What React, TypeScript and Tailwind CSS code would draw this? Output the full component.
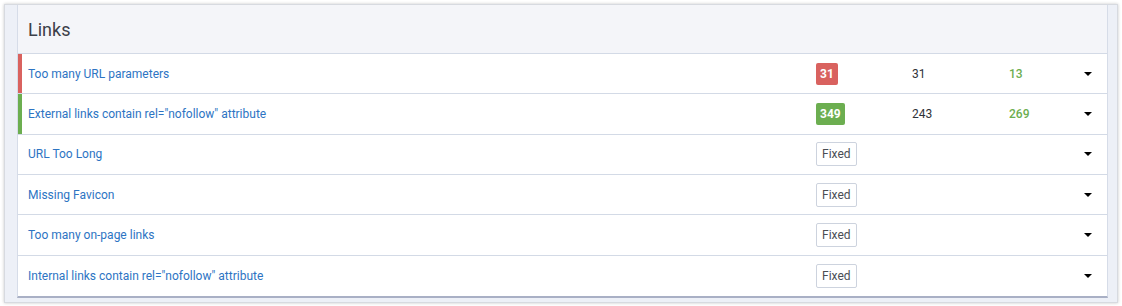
import React from "react"

type Issue = {
	title: string
	bar?: "red" | "green"
	count?: number
	found?: number
	fixed?: number
}

const issues: Issue[] = [
	{ title: "Too many URL parameters", bar: "red", count: 31, found: 31, fixed: 13 },
	{ title: 'External links contain rel="nofollow" attribute', bar: "green", count: 349, found: 243, fixed: 269 },
	{ title: "URL Too Long" },
	{ title: "Missing Favicon" },
	{ title: "Too many on-page links" },
	{ title: 'Internal links contain rel="nofollow" attribute' },
]

function Row({ issue, last }: { issue: Issue; last: boolean }) {
	const barColor = issue.bar === "red" ? "bg-[#d9625f]" : issue.bar === "green" ? "bg-[#6cae50]" : "bg-transparent"
	const badgeColor = issue.bar === "red" ? "bg-[#d9625f]" : "bg-[#6cae50]"
	return (
		<div className={`flex h-[40.33px] items-stretch ${last ? "" : "border-b border-[#d3dae6]"}`}>
			<div className={`w-[4px] shrink-0 ${barColor}`} />
			<div className="flex w-[794px] shrink-0 items-center pl-[6px]">
				<a className="text-[12px] text-[#2d74c3] cursor-pointer">{issue.title}</a>
			</div>
			<div className="flex w-[96px] shrink-0 items-center">
				{issue.count !== undefined ? (
					<span className={`rounded-[2px] px-[4px] h-[22px] leading-[22px] text-[12px] font-bold text-white ${badgeColor}`}>
						{issue.count}
					</span>
				) : (
					<span className="rounded-[2px] border border-[#cdd3de] bg-white px-[5px] h-[24px] leading-[22px] text-[12px] text-[#4a4d54]">
						Fixed
					</span>
				)}
			</div>
			<div className="flex w-[97px] shrink-0 items-center text-[12px] text-[#2f3238]">
				{issue.found}
			</div>
			<div className="flex flex-1 items-center text-[12px] font-medium text-[#6cae50]">
				{issue.fixed}
			</div>
			<div className="flex w-[23px] shrink-0 items-center">
				<span className="h-0 w-0 border-x-[4px] border-t-[4px] border-x-transparent border-t-black" />
			</div>
		</div>
	)
}

export default function App() {
	return (
		<div className="h-[306px] w-[1122px] bg-white p-[4px] font-['Roboto',sans-serif]">
			<div className="border border-[#d7dae0] bg-[#edf0f7] pl-[12px] pr-[9px] pb-[4px] shadow-[0_0_3px_rgba(0,0,0,0.22)]">
				<div className="border-x border-b-2 border-x-[#d6dce8] border-b-[#a9b0c5] bg-white">
					<div className="flex h-[49px] items-center border-b border-[#d3dae6] bg-[#f4f5f9] px-[10px] text-[18px] text-[#3c4049]">
						Links
					</div>
					{issues.map((issue, i) => (
						<Row key={i} issue={issue} last={i === issues.length - 1} />
					))}
				</div>
			</div>
		</div>
	)
}
